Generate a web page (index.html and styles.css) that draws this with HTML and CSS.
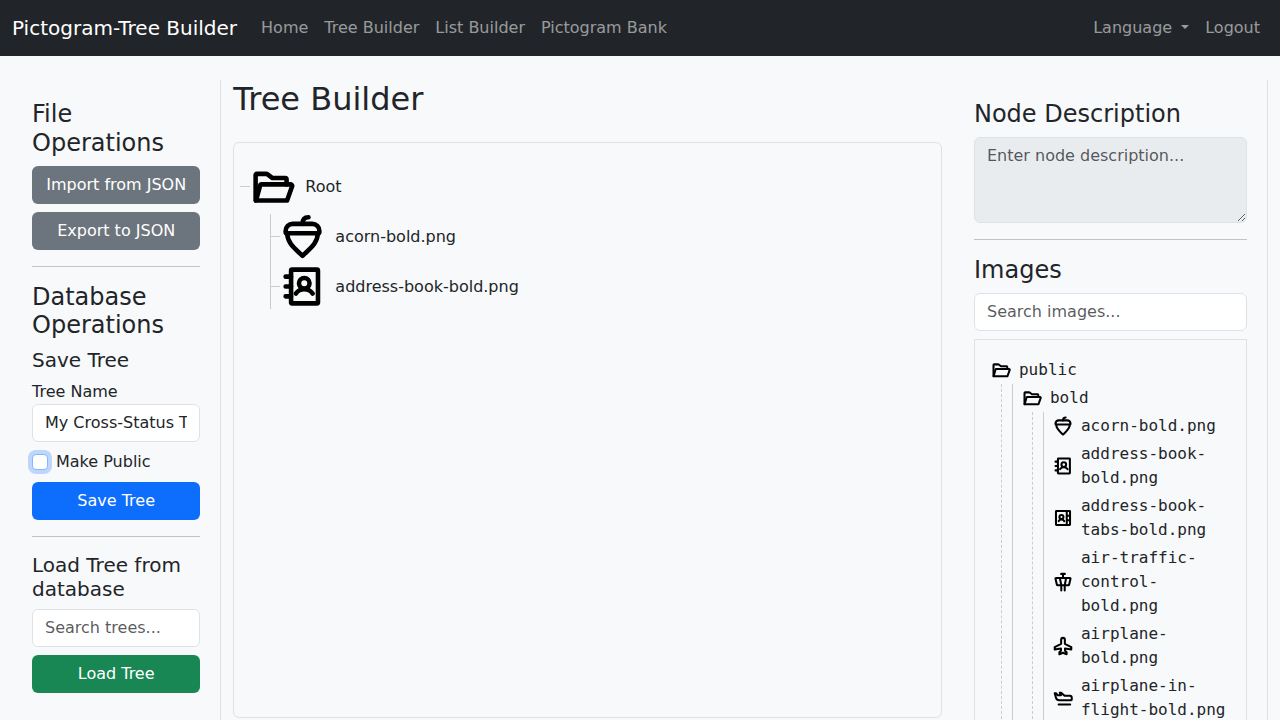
FILE: index.html
```html
<!DOCTYPE html>
<html lang="en">
<head>
<meta charset="utf-8">
<meta name="viewport" content="width=device-width, initial-scale=1">
<title>Pictogram-Tree Builder</title>
<link rel="stylesheet" href="styles.css">
</head>
<body>
<svg class="sprite" aria-hidden="true">
  <symbol id="folder" viewBox="0 0 256 256">
    <path d="M32,208V64a8,8,0,0,1,8-8H93.300a8,8,0,0,1,4.800,1.600L128,80h72a8,8,0,0,1,8,8v28"/>
    <path d="M34,208L58,122a8,8,0,0,1,8-6H232a8,8,0,0,1,7.600,10.500L211,208Z"/>
  </symbol>
  <symbol id="acorn" viewBox="0 0 256 256">
    <path d="M40,110a8,8,0,0,1-8-8V96A40,40,0,0,1,72,56H184a40,40,0,0,1,40,40v6a8,8,0,0,1-8,8Z"/>
    <path d="M41,110C41,168,90,200,128,238C166,200,215,168,215,110"/>
    <path d="M128,56C128,32,138,18,162,18"/>
  </symbol>
  <symbol id="book" viewBox="0 0 256 256">
    <rect x="63" y="32" width="153" height="192" rx="6"/>
    <path d="M32,72H63M32,128H63M32,184H63M90,168a60,60,0,0,1,96,0"/>
    <circle cx="138" cy="110" r="30"/>
  </symbol>
  <symbol id="tabs" viewBox="0 0 256 256">
    <rect x="38" y="38" width="180" height="180" rx="6"/>
    <path d="M176,40V216M176,98H216M176,157H216M72,168a42,42,0,0,1,72,0"/>
    <circle cx="108" cy="116" r="26"/>
  </symbol>
  <symbol id="tower" viewBox="0 0 256 256">
    <path d="M104,24H152M128,24V76"/>
    <path d="M40,76H216a8,8,0,0,1,8,10L206,162a12,12,0,0,1-10,8H60a12,12,0,0,1-10-8L32,86a8,8,0,0,1,8-10Z"/>
    <path d="M88,76L106,170V236M168,76L150,170V236"/>
  </symbol>
  <symbol id="plane" viewBox="0 0 256 256">
    <path d="M104,100V48a24,24,0,0,1,48,0V100L234,142V174L154,160V188L174,208V234L128,214L82,234V208L102,188V160L22,174V142Z"/>
  </symbol>
  <symbol id="flight" viewBox="0 0 256 256">
    <path d="M22,68H38L62,94H102L86,60H104L148,100H216a24,24,0,0,1,24,24V148a8,8,0,0,1-8,8H80A44,44,0,0,1,38,124Z"/>
    <path d="M72,212H220"/>
  </symbol>
</svg>

<nav class="navbar">
  <a class="brand" href="#">Pictogram-Tree Builder</a>
  <div class="nav-links">
    <a class="nav-link" href="#">Home</a>
    <a class="nav-link" href="#">Tree Builder</a>
    <a class="nav-link" href="#">List Builder</a>
    <a class="nav-link" href="#">Pictogram Bank</a>
  </div>
  <div class="nav-links nav-end">
    <button class="nav-link dropdown" type="button">Language <span class="caret"></span></button>
    <a class="nav-link" href="#">Logout</a>
  </div>
</nav>

<main class="layout">
  <aside class="side">
    <h4>File Operations</h4>
    <div class="stack">
      <button class="btn btn-grey" type="button">Import from JSON</button>
      <button class="btn btn-grey" type="button">Export to JSON</button>
    </div>
    <hr>
    <h4>Database Operations</h4>
    <h5>Save Tree</h5>
    <label for="tree-name">Tree Name</label>
    <div class="stack">
      <input class="field" id="tree-name" type="text" value="My Cross-Status Tree">
      <div class="check">
        <input class="checkbox focused" id="public" type="checkbox">
        <label for="public">Make Public</label>
      </div>
      <button class="btn btn-blue" type="button">Save Tree</button>
    </div>
    <hr>
    <h5>Load Tree from database</h5>
    <div class="stack">
      <input class="field" type="text" placeholder="Search trees..." aria-label="Search trees">
      <button class="btn btn-green" type="button">Load Tree</button>
    </div>
  </aside>

  <section class="center">
    <h2>Tree Builder</h2>
    <div class="canvas">
      <ul class="tree">
        <li>
          <div class="node"><svg class="icon"><use href="#folder"/></svg><span>Root</span></div>
          <ul>
            <li><div class="node"><svg class="icon"><use href="#acorn"/></svg><span>acorn-bold.png</span></div></li>
            <li><div class="node"><svg class="icon"><use href="#book"/></svg><span>address-book-bold.png</span></div></li>
          </ul>
        </li>
      </ul>
    </div>
  </section>

  <aside class="side">
    <h4><label for="description">Node Description</label></h4>
    <textarea class="field" id="description" rows="3" placeholder="Enter node description..." disabled></textarea>
    <hr>
    <h4>Images</h4>
    <div class="stack">
      <input class="field" type="text" placeholder="Search images..." aria-label="Search images">
      <div class="files">
        <div class="file"><svg class="icon"><use href="#folder"/></svg><span>public</span></div>
        <div class="branch"><div class="children">
          <div class="file"><svg class="icon"><use href="#folder"/></svg><span>bold</span></div>
          <div class="branch"><div class="children">
            <div class="file"><svg class="icon"><use href="#acorn"/></svg><span>acorn-bold.png</span></div>
            <div class="file"><svg class="icon"><use href="#book"/></svg><span>address-book-bold.png</span></div>
            <div class="file"><svg class="icon"><use href="#tabs"/></svg><span>address-book-tabs-bold.png</span></div>
            <div class="file"><svg class="icon"><use href="#tower"/></svg><span>air-traffic-control-bold.png</span></div>
            <div class="file"><svg class="icon"><use href="#plane"/></svg><span>airplane-bold.png</span></div>
            <div class="file"><svg class="icon"><use href="#flight"/></svg><span>airplane-in-flight-bold.png</span></div>
          </div></div>
        </div></div>
      </div>
    </div>
  </aside>
</main>
</body>
</html>
```
FILE: styles.css
```css
* { box-sizing: border-box; }

body {
  margin: 0;
  height: 100vh;
  display: flex;
  flex-direction: column;
  overflow: hidden;
  background: #f8f9fa;
  color: #212529;
  font: 16px/24px "DejaVu Sans", sans-serif;
}

button, input, textarea { font: inherit; color: inherit; }

.sprite { display: none; }

.icon {
  flex: none;
  fill: none;
  stroke: #000;
  stroke-width: 26;
  stroke-linecap: round;
  stroke-linejoin: round;
}

/* Top bar */
.navbar {
  flex: none;
  display: flex;
  align-items: center;
  gap: 16px;
  padding: 8px 12px;
  background: #212529;
}
.brand { color: #fff; font-size: 20px; line-height: 30px; text-decoration: none; }
.nav-links { display: flex; }
.nav-end { margin-left: auto; }
.nav-link {
  padding: 8px;
  border: 0;
  background: none;
  color: rgba(255, 255, 255, .55);
  text-decoration: none;
}
.caret {
  display: inline-block;
  margin-left: 4px;
  vertical-align: 4px;
  border: 4px solid transparent;
  border-top-color: currentColor;
  border-bottom: 0;
}

/* Columns */
.layout {
  flex: 1;
  min-height: 0;
  display: grid;
  grid-template-columns: 2fr 7fr 3fr;
  padding: 24px 12px 0;
}
.side {
  min-width: 0;
  overflow: hidden;
  padding: 20px;
  border-right: 1px solid #dee2e6;
}
.center { min-width: 0; padding: 0 12px; }

h2, h4, h5 { margin: 0 0 8px; font-weight: 400; line-height: 1.2; }
h2 { margin-bottom: 24px; font-size: 32px; }
h4 { font-size: 24px; }
h5 { font-size: 20px; }
hr { margin: 16px 0; border: 0; border-top: 1px solid rgba(33, 37, 41, .25); }
label { display: block; }

.stack { display: flex; flex-direction: column; gap: 8px; }

/* Controls */
.btn {
  padding: 6px 12px;
  border: 1px solid transparent;
  border-radius: 6px;
  color: #fff;
  white-space: nowrap;
}
.btn-grey { background: #6c757d; }
.btn-blue { background: #0d6efd; }
.btn-green { background: #198754; }

.field {
  display: block;
  width: 100%;
  padding: 6px 12px;
  border: 1px solid #dee2e6;
  border-radius: 6px;
  background: #fff;
}
.field::placeholder { color: rgba(33, 37, 41, .75); opacity: 1; }
.field:disabled { background: #e9ecef; }
textarea.field { resize: vertical; }

.check { display: flex; align-items: center; gap: 8px; }
.side:first-child { overflow: visible; }
.checkbox {
  appearance: none;
  width: 16px;
  height: 16px;
  margin: 0;
  border: 1px solid #dee2e6;
  border-radius: 4px;
  background: #fff;
}
.checkbox.focused {
  border-color: #86b7fe;
  box-shadow: 0 0 0 4px rgba(13, 110, 253, .25);
}

/* Tree being built */
.canvas {
  height: 80vh;
  padding: 16px;
  border: 1px solid #dee2e6;
  border-radius: 6px;
  overflow: auto;
}
.tree, .tree ul { margin: 0; padding: 0; list-style: none; }
.tree li { padding-top: 5px; }
.tree ul { margin: 5px 0 0 20px; padding-left: 9px; border-left: 1px solid #ccc; }
.tree ul li:first-child { padding-top: 0; }
.node { position: relative; display: flex; align-items: center; gap: 10px; }
.node::before {
  content: "";
  position: absolute;
  left: -10px;
  top: 22px;
  width: 10px;
  border-top: 1px solid #ccc;
}
.node .icon { width: 45px; height: 45px; }

/* Image files */
.files {
  padding: 16px;
  border: 1px solid #dee2e6;
  font-family: "DejaVu Sans Mono", monospace;
}
.file { display: flex; align-items: center; gap: 8px; padding: 2px 0; }
.file .icon { width: 20px; height: 20px; }
.branch { margin-left: 10px; padding-left: 10px; border-left: 1px dashed #ccc; }
.children { padding-left: 9px; border-left: 1px solid #ccc; }
```
